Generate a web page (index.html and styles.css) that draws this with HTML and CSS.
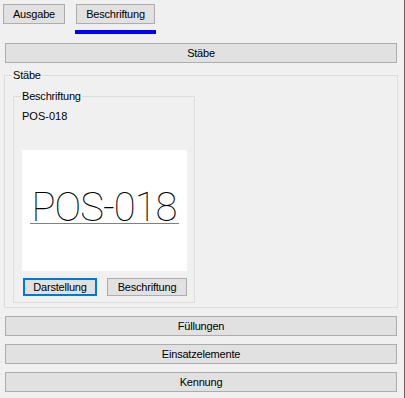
FILE: index.html
```html
<!DOCTYPE html>
<html lang="de">
<head>
    <meta charset="UTF-8">
    <meta name="viewport" content="width=device-width, initial-scale=1.0">
    <title>Stäbe</title>
    <link rel="stylesheet" href="styles.css">
</head>
<body>
    <div class="panel">
        <div class="tabs">
            <button class="btn tab">Ausgabe</button>
            <div class="tab-active">
                <button class="btn tab tab-wide">Beschriftung</button>
                <div class="tab-bar"></div>
            </div>
        </div>

        <button class="btn wide first">Stäbe</button>

        <fieldset class="group">
            <legend>Stäbe</legend>

            <fieldset class="group inner">
                <legend>Beschriftung</legend>
                <div class="pos-label">POS-018</div>

                <!-- preview of the label as drawn in the plan -->
                <div class="preview">
                    <div class="preview-text">POS-018</div>
                </div>

                <div class="actions">
                    <button class="btn small focused">Darstellung</button>
                    <button class="btn small second">Beschriftung</button>
                </div>
            </fieldset>
        </fieldset>

        <button class="btn wide">Füllungen</button>
        <button class="btn wide">Einsatzelemente</button>
        <button class="btn wide">Kennung</button>
    </div>
</body>
</html>
```

FILE: styles.css
```css
body {
    margin: 0;
    background-color: #f0f0f0;
    font-family: "Liberation Sans", Arial, sans-serif;
    font-size: 11px;
    color: #000;
}
.panel {
    width: 404px;
    height: 398px;
    border-right: 1px solid #646464;
    box-sizing: content-box;
    display: flex;
    flex-direction: column;
}
.btn {
    font-family: inherit;
    font-size: 11px;
    letter-spacing: -0.2px;
    color: #000;
    background: #e1e1e1;
    border: 1px solid #adadad;
    border-radius: 0;
    padding: 0;
    margin: 0;
    box-sizing: border-box;
    height: 20px;
    line-height: 17px;
}
.tabs {
    display: flex;
    align-items: flex-start;
    padding: 4px 0 0 3px;
    gap: 10px;
}
.tab {
    width: 62px;
}
.tab-active {
    display: flex;
    flex-direction: column;
}
.tab-wide {
    width: 79px;
    margin-left: 1px;
}
.tab-bar {
    width: 81px;
    height: 4px;
    margin-top: 6px;
    background: #0000ff;
}
.wide {
    display: block;
    flex: none;
    width: 392px;
    margin: 8px 0 0 5px;
}
.wide.first {
    margin-top: 9px;
}
.group {
    flex: none;
    border: 1px solid #dcdcdc;
    margin: 6px 0 0 4px;
    padding: 0 0 4px 8px;
    width: 394px;
    box-sizing: border-box;
    min-width: 0;
}
.group legend {
    padding: 0 1px;
    margin-left: -1px;
    line-height: 13px;
    letter-spacing: -0.2px;
}
.group.inner {
    width: 182px;
    margin: 8px 0 0 0;
    padding: 0 7px 6px 8px;
}
.pos-label {
    margin-top: 7px;
    line-height: 13px;
}
.preview {
    margin-top: 27px;
    height: 121px;
    background: #fff;
    display: flex;
    justify-content: center;
    align-items: flex-start;
}
.preview-text {
    margin-top: 42px;
    font-family: Roboto, "DejaVu Sans", sans-serif;
    font-weight: 100;
    font-size: 40px;
    letter-spacing: -1px;
    line-height: 31px;
    white-space: nowrap;
    padding: 0 3px 0 2px;
    border-bottom: 1px solid #808080;
}
.actions {
    display: flex;
    gap: 10px;
    margin-top: 7px;
    padding-left: 1px;
}
.small {
    height: 18px;
    line-height: 15px;
}
.focused {
    width: 74px;
    border: 2px solid #0078d7;
    line-height: 13px;
}
.second {
    width: 80px;
}
```
